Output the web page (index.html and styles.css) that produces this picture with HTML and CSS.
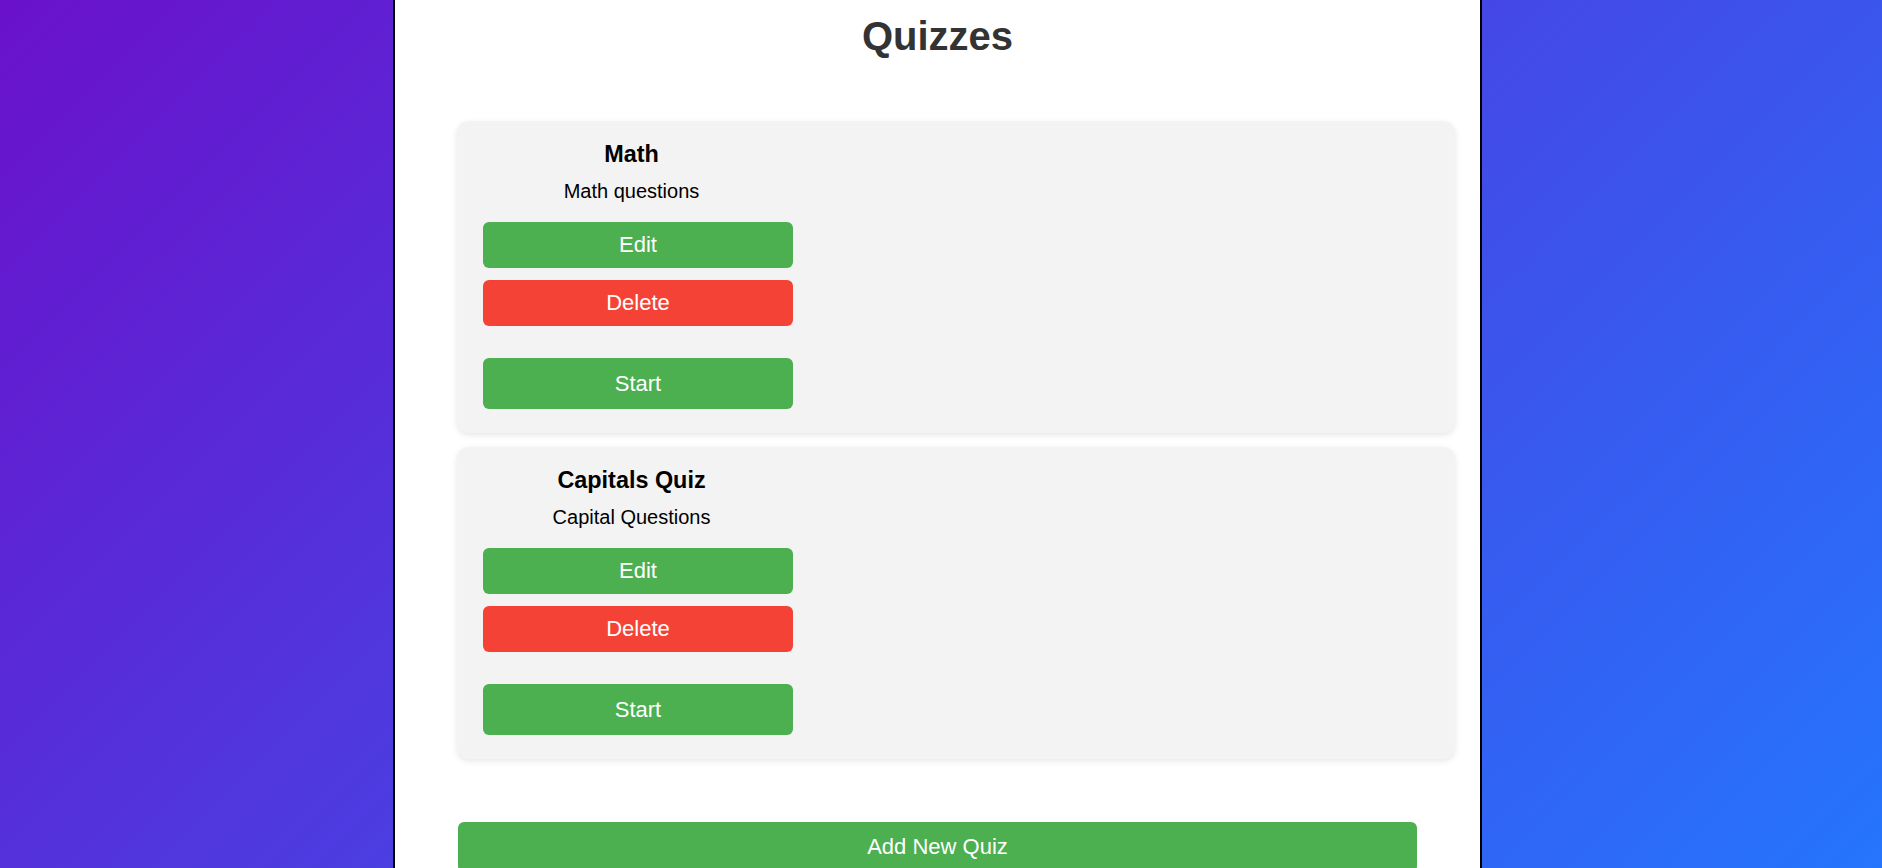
FILE: index.html
```html
<!DOCTYPE html>
<html lang="en">
<head>
<meta charset="utf-8">
<title>Quizzes</title>
<link rel="stylesheet" href="styles.css">
</head>
<body>
  <main class="panel">
    <h1 class="title">Quizzes</h1>
    <ul class="quiz-list">
      <li class="quiz-card">
        <div class="quiz-info">
          <h3 class="quiz-name">Math</h3>
          <p class="quiz-desc">Math questions</p>
          <button class="btn btn-green btn-edit">Edit</button>
          <button class="btn btn-red btn-delete">Delete</button>
          <button class="btn btn-green btn-start">Start</button>
        </div>
      </li>
      <li class="quiz-card">
        <div class="quiz-info">
          <h3 class="quiz-name">Capitals Quiz</h3>
          <p class="quiz-desc">Capital Questions</p>
          <button class="btn btn-green btn-edit">Edit</button>
          <button class="btn btn-red btn-delete">Delete</button>
          <button class="btn btn-green btn-start">Start</button>
        </div>
      </li>
    </ul>
    <div class="add-wrap">
      <button class="btn btn-green btn-add">Add New Quiz</button>
    </div>
  </main>
</body>
</html>
```
FILE: styles.css
```css
html, body {
  height: 100%;
}
body {
  margin: 0;
  padding-right: 7px;
  font-family: "Liberation Sans", Arial, sans-serif;
  font-size: 20px;
  background: linear-gradient(135deg, #6a11cb 0%, #2575fc 100%);
  overflow: hidden;
}
.panel {
  box-sizing: border-box;
  width: 1089px;
  min-height: 100%;
  margin: 0 auto;
  background: #fff;
  border-left: 2px solid #000;
  border-right: 2px solid #000;
  padding-top: 13px;
}
.title {
  margin: 0;
  text-align: center;
  font-size: 40px;
  line-height: 46px;
  font-weight: 700;
  color: #333;
}
.quiz-list {
  list-style: none;
  margin: 62px 25px 0 62px;
  padding: 0;
}
.quiz-card {
  background: #f3f3f3;
  border-radius: 12px;
  box-shadow: 0 2px 6px rgba(0, 0, 0, 0.1);
  padding: 20px 26px 24px;
  margin-bottom: 14px;
}
.quiz-card:last-child {
  margin-bottom: 0;
}
.quiz-info {
  width: 297px;
  display: flex;
  flex-direction: column;
  align-items: center;
}
.quiz-name {
  margin: 0;
  font-size: 23.4px;
  line-height: 27px;
  font-weight: 700;
  color: #000;
}
.quiz-desc {
  margin: 12px 0 0;
  font-size: 20px;
  line-height: 23px;
  color: #000;
}
.btn {
  font-family: "Liberation Sans", Arial, sans-serif;
  font-size: 22px;
  color: #fff;
  border: none;
  border-radius: 6px;
  cursor: pointer;
  display: block;
  padding: 0;
}
.btn-green {
  background: #4caf50;
}
.btn-red {
  background: #f44336;
}
.quiz-info .btn {
  align-self: flex-start;
  width: 310px;
}
.btn-edit {
  margin-top: 19px;
  height: 46px;
}
.btn-delete {
  margin-top: 12px;
  height: 46px;
}
.btn-start {
  margin-top: 32px;
  height: 51px;
}
.add-wrap {
  margin: 63px 63px 0;
}
.btn-add {
  width: 100%;
  height: 50px;
}
```
